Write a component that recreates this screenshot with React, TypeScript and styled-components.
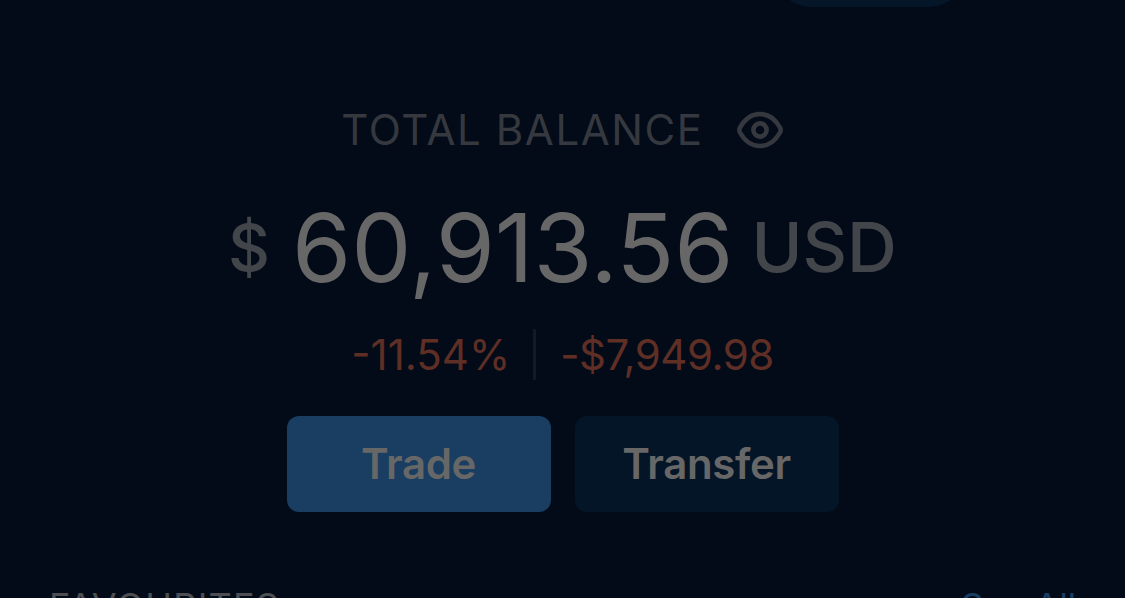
import styled, { createGlobalStyle } from 'styled-components';

const GlobalStyle = createGlobalStyle`
  body {
    margin: 0;
    background: #030b18;
    font-family: Inter, sans-serif;
  }
`;

const Screen = styled.main`
  width: 1125px;
  height: 598px;
  overflow: hidden;
  display: flex;
  flex-direction: column;
  align-items: center;
  background: #030b18;
`;

const TopPill = styled.div`
  width: 190px;
  height: 7px;
  margin-left: 615px;
  flex: none;
  overflow: hidden;

  &::before {
    content: '';
    display: block;
    height: 72px;
    margin-top: -65px;
    border-radius: 36px;
    background: #051629;
  }
`;

const BalanceHeader = styled.div`
  display: flex;
  align-items: center;
  gap: 32px;
  height: 48px;
  margin-top: 99px;
  color: #35393f;
`;

const BalanceLabel = styled.span`
  font-size: 42px;
  line-height: 48px;
  letter-spacing: 1.6px;
`;

const BalanceRow = styled.div`
  display: flex;
  align-items: center;
  height: 100px;
  margin-top: 43px;
  white-space: nowrap;
`;

const Amount = styled.span`
  margin: 0 18px 0 22px;
  font-size: 95.5px;
  line-height: 100px;
  letter-spacing: -0.1px;
  color: #676767;
`;

const Currency = styled.span<{ $size: number }>`
  font-size: ${({ $size }) => $size}px;
  font-weight: 500;
  color: #42454a;
`;

const ChangeRow = styled.div`
  display: flex;
  align-items: center;
  height: 52px;
  margin-top: 31px;
  color: #5f2e24;
  font-size: 42px;
`;

const ChangeValue = styled.span`
  letter-spacing: -0.5px;
`;

const Divider = styled.span`
  width: 3px;
  height: 51px;
  margin: 1px 24px 0 23px;
  background: #131a25;
`;

const Actions = styled.div`
  display: flex;
  gap: 24px;
  margin-top: 36px;
`;

const ActionButton = styled.button<{ $primary?: boolean }>`
  width: 264px;
  height: 96px;
  padding: 0;
  border: 0;
  border-radius: 12px;
  background: ${({ $primary }) => ($primary ? '#1a3d62' : '#051528')};
  color: #676767;
  font: 600 42px/96px Inter, sans-serif;
  letter-spacing: -0.35px;
`;

const SectionHeader = styled.div`
  display: flex;
  justify-content: space-between;
  width: 1027px;
  margin-top: 70px;
  flex: none;
  font-size: 36px;
  line-height: 48px;
`;

const SectionTitle = styled.span`
  letter-spacing: 1.2px;
  color: #4c4e52;
`;

const SeeAll = styled.a`
  letter-spacing: -0.3px;
  color: #1a3d62;
`;

const EyeIcon = () => (
  <svg width="48" height="40" viewBox="0 0 48 40" fill="none" stroke="currentColor" strokeWidth="4.6">
    <path d="M4 17.5C9 8.500 15.500 4 24 4s15 4.500 20 13.500q1.300 2.500 0 5C39 31.500 32.500 36 24 36S9 31.500 4 22.500q-1.300-2.500 0-5Z" />
    <circle cx="24" cy="20" r="6.600" />
  </svg>
);

const App = () => (
  <>
    <GlobalStyle />
    <Screen>
      <TopPill />
      <BalanceHeader>
        <BalanceLabel>TOTAL BALANCE</BalanceLabel>
        <EyeIcon />
      </BalanceHeader>
      <BalanceRow>
        <Currency $size={65}>$</Currency>
        <Amount>60,913.56</Amount>
        <Currency $size={69}>USD</Currency>
      </BalanceRow>
      <ChangeRow>
        <span>-11.54%</span>
        <Divider />
        <ChangeValue>-$7,949.98</ChangeValue>
      </ChangeRow>
      <Actions>
        <ActionButton $primary>Trade</ActionButton>
        <ActionButton>Transfer</ActionButton>
      </Actions>
      <SectionHeader>
        <SectionTitle>FAVOURITES</SectionTitle>
        <SeeAll>See All</SeeAll>
      </SectionHeader>
    </Screen>
  </>
);

export default App;
